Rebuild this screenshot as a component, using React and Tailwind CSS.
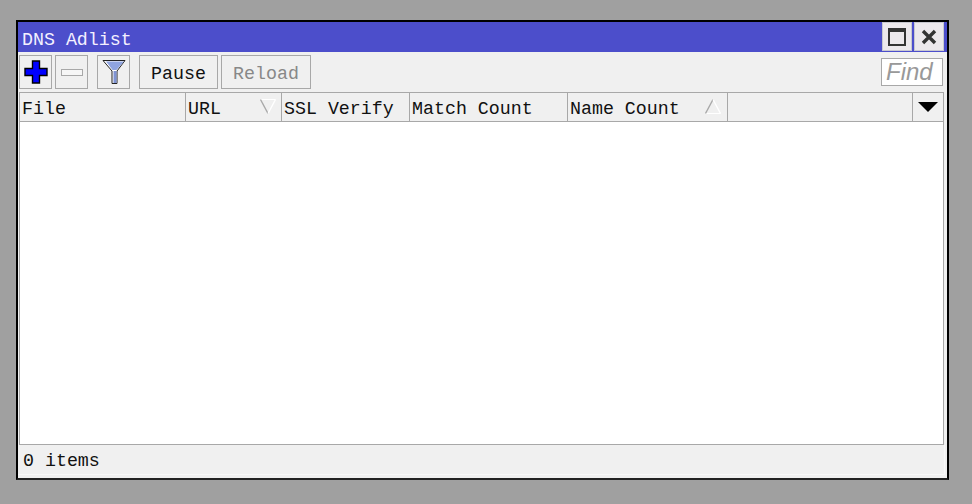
const mono = { fontFamily: '"Liberation Mono", monospace' };

const columns = [
  { label: "File", width: "w-[166px]" },
  { label: "URL", width: "w-[96px]", sort: "down", markRight: "right-[5px]" },
  { label: "SSL Verify", width: "w-[128px]" },
  { label: "Match Count", width: "w-[158px]" },
  { label: "Name Count", width: "w-[160px]", sort: "up", markRight: "right-[6px]" },
];

function SortMark({ dir, className }) {
  return (
    <svg width="16" height="15" viewBox="0 0 16 15" className={`absolute top-[6px] ${className}`}>
      {dir === "down" ? (
        <>
          <path d="M0.5 0.5H15.5" stroke="#ffffff" />
          <path d="M0.5 0.5L8 14.5" stroke="#a8a8a8" strokeWidth="1.4" />
          <path d="M15.5 0.5L8 14.5" stroke="#ffffff" strokeWidth="1.4" />
        </>
      ) : (
        <>
          <path d="M0.5 14.5H15.5" stroke="#ffffff" />
          <path d="M0.5 14.5L8 0.5" stroke="#a8a8a8" strokeWidth="1.4" />
          <path d="M15.5 14.5L8 0.5" stroke="#ffffff" strokeWidth="1.4" />
        </>
      )}
    </svg>
  );
}

function ToolButton({ children, className = "" }) {
  return (
    <div className={`flex h-[34px] items-center justify-center border border-[#a8a8a8] bg-[#f0f0f0] ${className}`}>
      {children}
    </div>
  );
}

export default function App() {
  return (
    <div className="h-[504px] w-[972px] overflow-hidden bg-[#a0a0a0] pl-[16px] pt-[20px]" style={mono}>
      <div className="flex h-[460px] w-[933px] flex-col border-2 border-black border-b-[#222222] bg-[#f0f0f0]">
        {/* title bar */}
        <div className="flex h-[30px] shrink-0 items-center justify-between bg-[#4c4ecb] pl-[4px] pr-[3px]">
          <span className="pt-[6px] text-[18.3px] leading-none text-[#f4f0ff]">DNS Adlist</span>
          <div className="flex h-[29px] gap-[2px] self-start">
            <div className="flex w-[30px] items-center justify-center border border-[#c8c8d0] bg-[#ece8ec]">
              <div className="h-[18px] w-[18px] border-2 border-t-[4px] border-[#333333]" />
            </div>
            <div className="flex w-[30px] items-center justify-center border border-[#c8c8d0] bg-[#ece8ec]">
              <svg width="16" height="16" viewBox="0 0 16 16">
                <path d="M2 2L14 14M14 2L2 14" stroke="#333333" strokeWidth="3.4" />
              </svg>
            </div>
          </div>
        </div>

        {/* toolbar */}
        <div className="flex h-[40px] shrink-0 items-center pl-[1px] pr-[4px]">
          <ToolButton className="w-[33px]">
            <svg width="24" height="24" viewBox="0 0 24 24" className="ml-[1px]">
              <path d="M8.5 1H15.5V8.5H23V15.5H15.5V23H8.5V15.5H1V8.5H8.5Z" fill="#0000ff" stroke="#000000" strokeWidth="1.4" />
            </svg>
          </ToolButton>
          <ToolButton className="ml-[3px] w-[33px]">
            <div className="h-[7px] w-[22px] border border-[#a8a8a8] bg-[#f6f6f6]" />
          </ToolButton>
          <ToolButton className="ml-[9px] w-[33px]">
            <svg width="24" height="26" viewBox="0 0 24 26">
              <path d="M1 1.5H23L15 12V24.5H10V12Z" fill="#ffffff" stroke="#222222" />
              <path d="M4 2.5H22L14.5 11H10.5Z" fill="#8fa4e0" />
              <path d="M13 12V24" stroke="#7f93d2" strokeWidth="3" />
            </svg>
          </ToolButton>
          <ToolButton className="ml-[9px] w-[79px] pt-[5px] text-[18.3px] text-[#111111]">Pause</ToolButton>
          <ToolButton className="ml-[3px] w-[90px] pt-[5px] text-[18.3px] text-[#888888]">Reload</ToolButton>
          <div
            className="ml-auto flex h-[28px] w-[62px] items-center border border-[#a8a8a8] bg-white pl-[4px] text-[24px] italic text-[#999999]"
            style={{ fontFamily: '"Liberation Sans", sans-serif' }}
          >
            Find
          </div>
        </div>

        {/* list */}
        <div className="ml-[1px] flex min-h-0 w-[925px] flex-1 flex-col border-b border-[#a8a8a8]">
          <div className="flex h-[30px] shrink-0 border-y border-l border-[#a8a8a8]">
            {columns.map((col) => (
              <div
                key={col.label}
                className={`relative flex ${col.width} shrink-0 items-center border-r border-[#a8a8a8] pl-[2px] pt-[5px] text-[18.3px] text-[#111111]`}
              >
                {col.label}
                {col.sort ? <SortMark dir={col.sort} className={col.markRight} /> : null}
              </div>
            ))}
            <div className="flex-1 border-r border-[#a8a8a8]" />
            <div className="flex w-[31px] items-center justify-center border-r border-[#a8a8a8]">
              <svg width="20" height="10" viewBox="0 0 20 10">
                <path d="M0 0H20L10 10Z" fill="#000000" />
              </svg>
            </div>
          </div>
          <div className="flex-1 border-x border-[#a8a8a8] bg-white" />
        </div>

        {/* status bar */}
        <div className="h-[33px] shrink-0">
          <div className="flex h-[30px] w-[927px] items-center border-b border-r border-[#f8f8f8] pl-[5px] pt-[5px] text-[18.3px] text-[#111111]">
            0 items
          </div>
        </div>
      </div>
    </div>
  );
}
